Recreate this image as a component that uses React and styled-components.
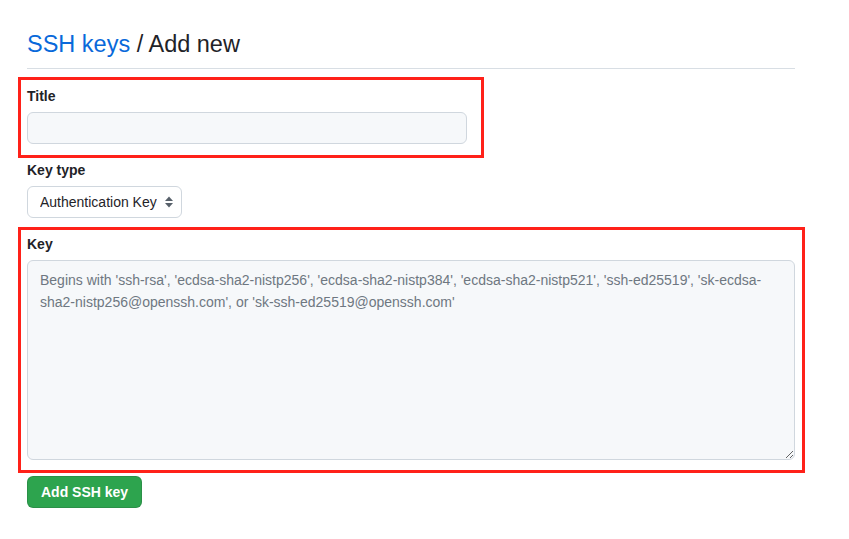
import React from 'react';
import styled, { createGlobalStyle } from 'styled-components';

const GlobalStyle = createGlobalStyle`
  body {
    margin: 0;
    background: #ffffff;
    font-family: "Liberation Sans", Arial, sans-serif;
    color: #1f2328;
  }
`;

const Page = styled.div`
  width: 768px;
  padding: 26px 0 30px 27px;
`;

const Heading = styled.h2`
  margin: 0 0 8px;
  padding-bottom: 6px;
  border-bottom: 1px solid #d8dee4;
  font-size: 23.5px;
  font-weight: 400;
  line-height: 36px;
  color: #1f2328;

  a {
    color: #0969da;
    text-decoration: none;
  }
`;

const Highlight = styled.div`
  width: ${(p) => p.$width}px;
  margin-left: -9px;
  padding: ${(p) => p.$top}px 7px ${(p) => p.$bottom}px 6px;
  border: 3px solid #ff2119;
  box-sizing: border-box;
`;

const Group = styled.div`
  margin-top: ${(p) => p.$mt || 0}px;
`;

const Label = styled.label`
  display: block;
  margin-bottom: 5px;
  font-size: 14px;
  font-weight: 700;
  line-height: 21px;
`;

const Input = styled.input`
  display: block;
  width: 440px;
  height: 32px;
  box-sizing: border-box;
  padding: 5px 12px;
  border: 1px solid #d0d7de;
  border-radius: 6px;
  background: #f6f8fa;
  font: inherit;
  font-size: 14px;
  outline: none;
`;

const SelectWrap = styled.div`
  position: relative;
  width: 155px;
`;

const Select = styled.select`
  appearance: none;
  display: block;
  width: 155px;
  height: 32px;
  box-sizing: border-box;
  padding: 0 24px 0 12px;
  border: 1px solid #d0d7de;
  border-radius: 6px;
  background: #ffffff;
  color: #1f2328;
  font-family: inherit;
  font-size: 14px;
  outline: none;
`;

const Caret = styled.svg`
  position: absolute;
  right: 8px;
  top: 10px;
  pointer-events: none;
`;

const Textarea = styled.textarea`
  display: block;
  width: 768px;
  height: 200px;
  box-sizing: border-box;
  padding: 8px 12px;
  border: 1px solid #d0d7de;
  border-radius: 6px;
  background: #f6f8fa;
  font-family: inherit;
  font-size: 14px;
  line-height: 22px;
  color: #1f2328;
  resize: vertical;
  outline: none;

  &::placeholder {
    color: #6e7781;
  }
`;

const Button = styled.button`
  margin-top: 3px;
  height: 32px;
  padding: 0 13px;
  border: 1px solid rgba(31, 35, 40, 0.15);
  border-radius: 6px;
  background: #2da44e;
  color: #ffffff;
  font-family: inherit;
  font-size: 14px;
  font-weight: 700;
  cursor: pointer;
`;

const placeholder =
  "Begins with 'ssh-rsa', 'ecdsa-sha2-nistp256', 'ecdsa-sha2-nistp384', 'ecdsa-sha2-nistp521', 'ssh-ed25519', 'sk-ecdsa-sha2-nistp256@openssh.com', or 'sk-ssh-ed25519@openssh.com'";

export default function App() {
  return (
    <Page>
      <GlobalStyle />
      <Heading>
        <a href="#keys">SSH keys</a> / Add new
      </Heading>

      <Highlight $width={466} $top={6} $bottom={11}>
        <Label htmlFor="title">Title</Label>
        <Input id="title" type="text" />
      </Highlight>

      <Group $mt={2}>
        <Label htmlFor="type">Key type</Label>
        <SelectWrap>
          <Select id="type" defaultValue="auth">
            <option value="auth">Authentication Key</option>
            <option value="signing">Signing Key</option>
          </Select>
          <Caret width="10" height="12" viewBox="0 0 10 12">
            <path d="M5 0.5 L9 5 H1 Z" fill="#57606a" />
            <path d="M5 11.5 L9 7 H1 Z" fill="#57606a" />
          </Caret>
        </SelectWrap>
      </Group>

      <Group $mt={9}>
        <Highlight $width={787} $top={4} $bottom={10}>
          <Label htmlFor="key">Key</Label>
          <Textarea id="key" placeholder={placeholder} />
        </Highlight>
      </Group>

      <Button type="button">Add SSH key</Button>
    </Page>
  );
}
